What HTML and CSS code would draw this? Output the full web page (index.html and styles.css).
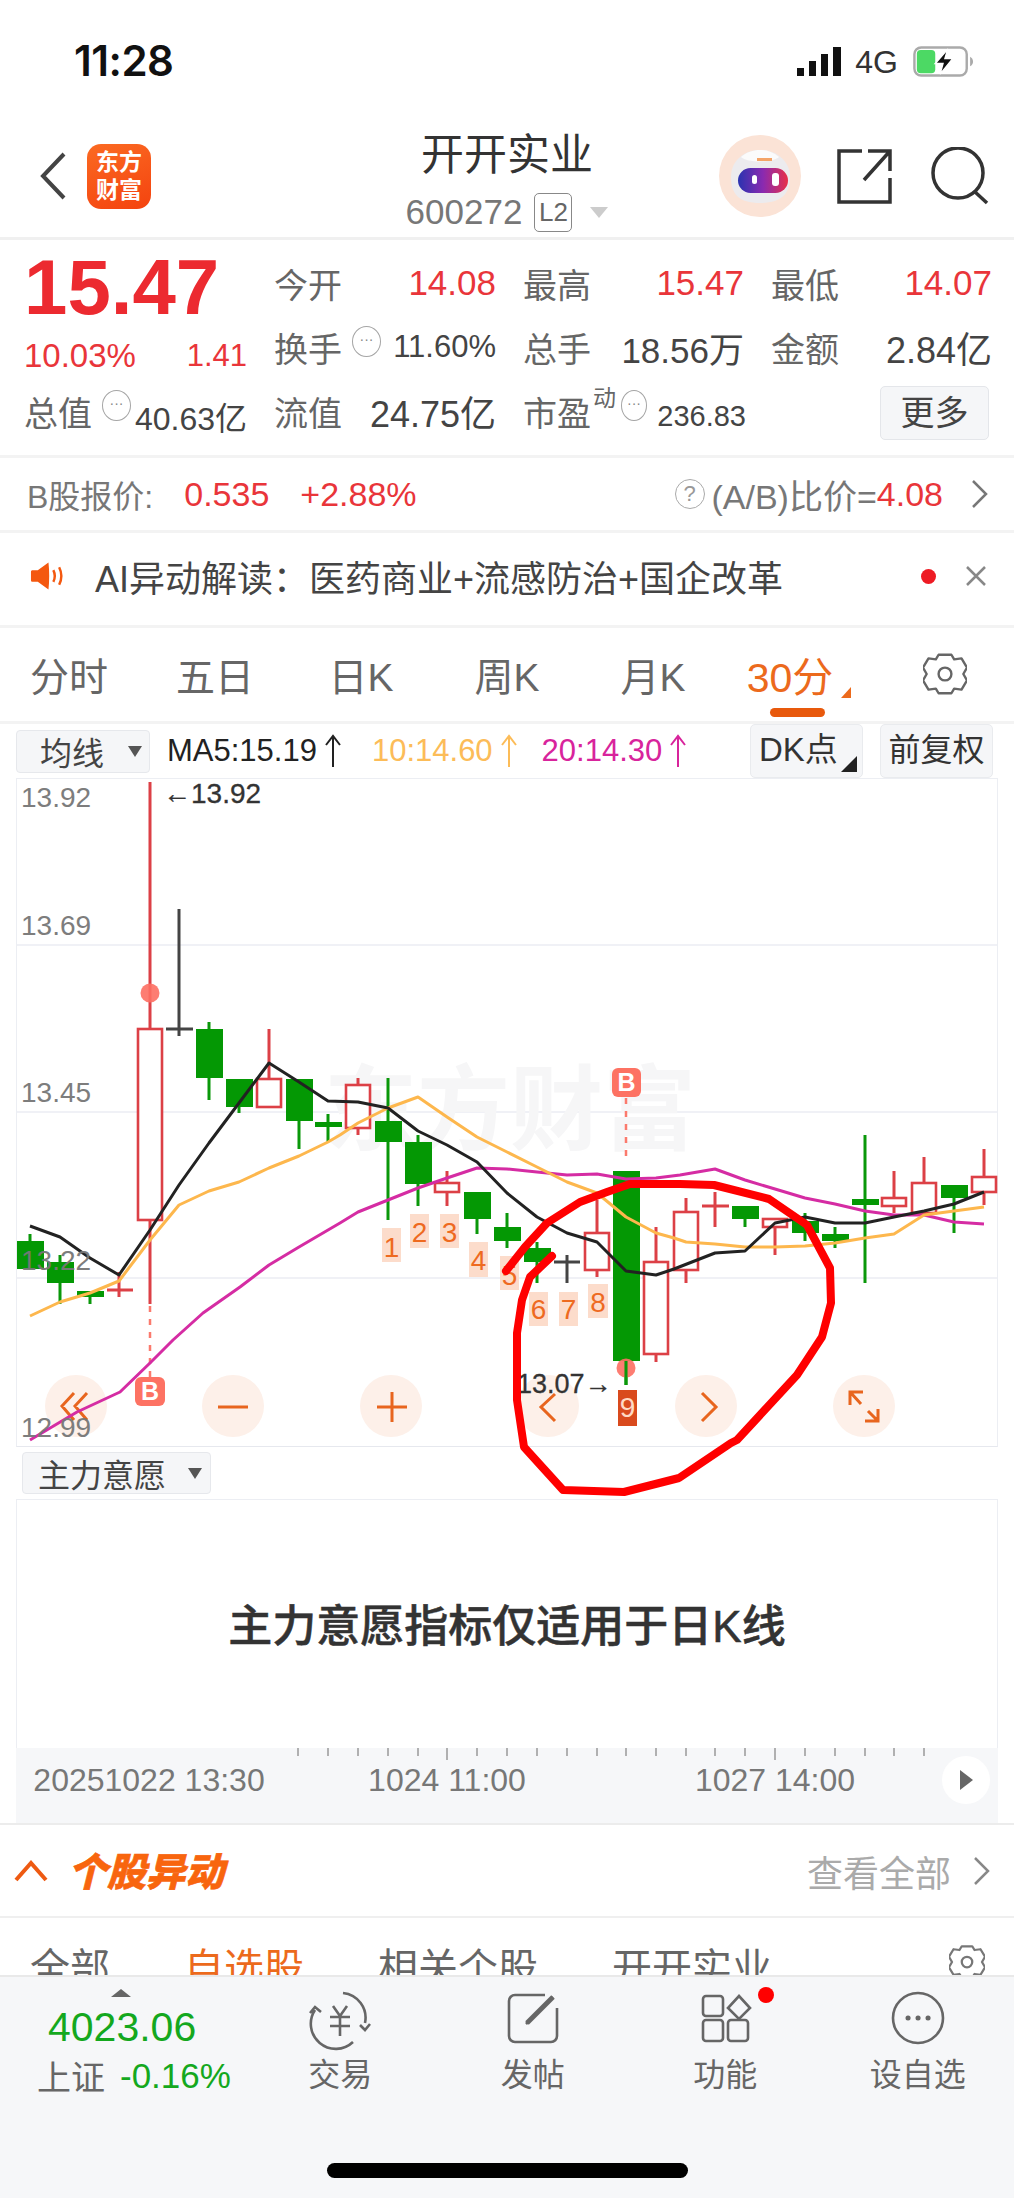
FILE: index.html
```html
<!DOCTYPE html>
<html lang="zh">
<head>
<meta charset="utf-8">
<title>开开实业</title>
<link rel="stylesheet" href="styles.css">
</head>
<body>
<div class="page">
  <div class="status">
    <span class="time">11:28</span>
    <div class="status-right">
      <svg class="signal" viewBox="0 0 45 30"><path d="M0 21h7v8H0zM12 14h7v15h-7zM24 7h7v22h-7zM36 0h8v29h-8z" fill="#111"/></svg>
      <span class="net">4G</span>
      <svg class="battery" viewBox="0 0 62 32"><rect x="1.5" y="1.5" width="54" height="29" rx="7" fill="none" stroke="#aaa" stroke-width="2.5"/><path d="M59 11c2 1 3 3 3 5s-1 4-3 5z" fill="#aaa"/><rect x="4" y="4" width="19" height="24" rx="4" fill="#4cd964"/><path d="M36 3 23 18h8l-3 11 13-16h-8z" fill="#111" stroke="#fff" stroke-width="1.5"/></svg>
    </div>
  </div>

  <header class="topbar">
    <div class="top-left">
      <svg class="back" viewBox="0 0 26 48"><path d="M24 2 3 24l21 22" fill="none" stroke="#444" stroke-width="4"/></svg>
      <div class="logo"><span>东方</span><span>财富</span></div>
    </div>
    <div class="top-center">
      <div class="title">开开实业</div>
      <div class="sub"><span>600272</span><span class="l2">L2</span><i class="sub-tri"></i></div>
    </div>
    <div class="top-right">
      <svg class="avatar" viewBox="0 0 82 82">
        <defs><linearGradient id="visor" x1="0" x2="1"><stop offset="0" stop-color="#2a33b0"/><stop offset=".5" stop-color="#8a2ab0"/><stop offset="1" stop-color="#e8304a"/></linearGradient></defs>
        <circle cx="41" cy="41" r="41" fill="#fbe3d6"/>
        <path d="M12 42C12 25 26 15 41 15s30 10 30 27-9 26-30 26S12 59 12 42z" fill="#ecebee"/>
        <path d="M22 22c6-5 12-7 19-7s13 2 19 7c-6 6-32 6-38 0z" fill="#fbfbfb"/>
        <rect x="19" y="33" width="50" height="25" rx="12.5" fill="url(#visor)"/>
        <rect x="33" y="40" width="5" height="9" rx="2.5" fill="#fff"/><rect x="53" y="38" width="7" height="13" rx="3" fill="#fff"/>
        <rect x="38" y="23" width="15" height="3" fill="#f4a468"/>
      </svg>
      <svg class="share" viewBox="0 0 56 56"><path d="M26 3H3v51h51V30M28 32 54 3M32 3h22v20" fill="none" stroke="#333" stroke-width="3.5"/></svg>
      <svg class="search" viewBox="0 0 60 58"><circle cx="28" cy="26" r="25" fill="none" stroke="#333" stroke-width="3.5"/><path d="m44 44 13 12" stroke="#333" stroke-width="3.5" fill="none"/></svg>
    </div>
  </header>

  <section class="quote">
    <div class="cell"><span class="price">15.47</span></div>
    <div class="cell"><span class="lb">今开</span><span class="val up">14.08</span></div>
    <div class="cell"><span class="lb">最高</span><span class="val up">15.47</span></div>
    <div class="cell"><span class="lb">最低</span><span class="val up">14.07</span></div>

    <div class="cell cell-low"><span class="val33 up">10.03%</span><span class="val31 up">1.41</span></div>
    <div class="cell"><span class="group"><span class="lb">换手</span><i class="dots">···</i></span><span class="val31">11.60%</span></div>
    <div class="cell"><span class="lb">总手</span><span class="val35">18.56万</span></div>
    <div class="cell"><span class="lb">金额</span><span class="val36">2.84亿</span></div>

    <div class="cell"><span class="group"><span class="lb">总值</span><i class="dots">···</i></span><span class="val32 drop">40.63亿</span></div>
    <div class="cell"><span class="lb">流值</span><span class="val36">24.75亿</span></div>
    <div class="cell"><span class="group"><span class="lb">市盈</span><sup class="dyn">动</sup><i class="dots tight">···</i></span><span class="val29 drop">236.83</span></div>
    <div class="cell cell-end"><button class="more">更多</button></div>
  </section>

  <section class="brow">
    <div class="brow-left"><span class="blb">B股报价:</span><span class="up">0.535</span><span class="up">+2.88%</span></div>
    <div class="brow-right"><i class="help">?</i><span class="blb2">(A/B)比价=</span><span class="up">4.08</span>
      <svg class="chev" viewBox="0 0 17 30"><path d="m2 2 13 13L2 28" fill="none" stroke="#777" stroke-width="2.5"/></svg></div>
  </section>

  <section class="airow">
    <svg class="speaker" viewBox="0 0 36 30"><path d="M2 9h6l11-8c1 9 1 19 0 28L8 21H2a2 2 0 0 1-1-2v-8a2 2 0 0 1 1-2z" fill="#f4580f"/><path d="M24 9c2 4 2 8 0 12M30 6c3 6 3 12 0 18" fill="none" stroke="#f4580f" stroke-width="2.5"/></svg>
    <span class="aitext">AI异动解读：医药商业+流感防治+国企改革</span>
    <i class="reddot"></i>
    <svg class="close" viewBox="0 0 22 22"><path d="m2 2 18 18M20 2 2 20" stroke="#888" stroke-width="2.5"/></svg>
  </section>

  <nav class="tabs">
    <span>分时</span><span>五日</span><span>日K</span><span>周K</span><span>月K</span>
    <span class="active">30分</span>
    <svg class="gear" viewBox="-24 -24 48 48"><path d="M-7-21H7l3 5 8-1 6 10-4 7 4 7-6 10-8-1-3 5H-7l-3-5-8 1-6-10 4-7-4-7 6-10 8 1z" fill="none" stroke="#666" stroke-width="2.6" stroke-linejoin="round"/><circle r="7" fill="none" stroke="#666" stroke-width="2.6"/></svg>
  </nav>

  <div class="mabar">
    <div class="select ma-select"><span>均线</span><i class="down"></i></div>
    <span class="ma black">MA5:15.19<svg class="arr" viewBox="0 0 18 34"><path d="M9 33V2M2 11l7-9 7 9" fill="none" stroke="currentColor" stroke-width="2"/></svg></span>
    <span class="ma yellow">10:14.60<svg class="arr" viewBox="0 0 18 34"><path d="M9 33V2M2 11l7-9 7 9" fill="none" stroke="currentColor" stroke-width="2"/></svg></span>
    <span class="ma pink">20:14.30<svg class="arr" viewBox="0 0 18 34"><path d="M9 33V2M2 11l7-9 7 9" fill="none" stroke="currentColor" stroke-width="2"/></svg></span>
    <span class="spacer"></span>
    <div class="btn dk">DK点<i class="corner"></i></div>
    <div class="btn fq">前复权</div>
  </div>

  <div class="chart">
    <svg class="chart-svg" viewBox="16 778 982 669">
      <path class="grid" d="M17 945H997M17 1112H997M17 1278H997"/>
      <text class="watermark" x="324" y="1143">东方财富</text>

      <circle class="ctl" cx="76" cy="1406" r="31"/><circle class="ctl" cx="233" cy="1406" r="31"/><circle class="ctl" cx="391" cy="1406" r="31"/><circle class="ctl" cx="548" cy="1406" r="31"/><circle class="ctl" cx="706" cy="1406" r="31"/><circle class="ctl" cx="864" cy="1406" r="31"/>
      <path class="ctl-ico" d="M74 1393 62 1406l12 14M87 1393l-12 13 12 14M218 1407h30M377 1407h30M392 1392v30M555 1394l-14 13 14 14M702 1393l14 14-14 14M861 1404 851 1393M850 1405v-13h13M868 1411l9 9M878 1409v12h-13"/>

      <path class="g-wick" d="M30 1234V1241M60 1255V1304M90 1291V1304M209 1022V1100M239 1079V1113M299 1079V1149M328 1114V1142M388 1078V1220M418 1135V1206M477 1192V1234M507 1213V1248M537 1242V1283M626 1361V1385M745 1206V1227M805 1213V1241M835 1227V1248M865 1135V1283M954 1185V1233"/>
      <path class="g-body" d="M17 1241h27v28h-27zM47 1262h27v21h-27zM77 1291h27v6h-27zM196 1029h27v49h-27zM226 1079h27v28h-27zM286 1079h27v42h-27zM315 1122h27v5h-27zM375 1121h27v21h-27zM405 1142h27v42h-27zM464 1192h27v27h-27zM494 1227h27v14h-27zM524 1248h27v14h-27zM613 1171h27v190h-27zM732 1206h27v13h-27zM792 1221h27v12h-27zM822 1234h27v7h-27zM852 1199h27v6h-27zM941 1185h27v13h-27z"/>

      <path class="r-wick" d="M150 782V1029M150 1220V1304M269 1029V1079M358 1078V1085M358 1128V1135M447 1171V1183M447 1192V1206M597 1200V1233M597 1270V1277M656 1227V1262M656 1354V1362M686 1198V1212M686 1270V1283M775 1227V1255M894 1171V1198M894 1206V1213M924 1157V1183M984 1149V1177M984 1192V1205M107 1290H133M119 1272V1297M702 1206H729M715 1192V1227"/>
      <g class="r-body">
        <rect x="138" y="1029" width="24" height="191"/><rect x="257" y="1079" width="24" height="28"/><rect x="346" y="1085" width="24" height="43"/><rect x="435" y="1183" width="24" height="9"/><rect x="585" y="1233" width="24" height="37"/><rect x="644" y="1262" width="24" height="92"/><rect x="674" y="1212" width="24" height="58"/><rect x="763" y="1219" width="24" height="8"/><rect x="882" y="1198" width="24" height="8"/><rect x="912" y="1183" width="24" height="30"/><rect x="972" y="1177" width="24" height="15"/>
      </g>
      <path class="d-wick" d="M179 909V1036M166 1029H193M567 1255V1283M554 1262H580"/>

      <path class="dash" d="M150 1306V1377M626 1098V1160"/>
      <circle class="mark" cx="150" cy="993" r="9.5"/>
      <circle class="mark" cx="626" cy="1368" r="9.5"/>
      <path class="g-wick" d="M626 1361V1385"/>

      <polyline class="l-pink" points="30,1440 77,1412 120,1392 150,1363 173,1340 203,1313 240,1287 269,1265 299,1247 340,1223 358,1212 388,1200 418,1188 447,1178 477,1168 507,1169 537,1172 567,1175 597,1174 626,1179 656,1178 680,1175 715,1169 745,1180 775,1189 805,1198 835,1204 865,1211 894,1215 924,1215 954,1222 984,1224"/>
      <polyline class="l-yellow" points="30,1316 60,1302 90,1293 119,1281 150,1240 179,1205 209,1191 239,1182 269,1168 299,1156 328,1142 340,1135 358,1123 388,1108 418,1097 447,1117 477,1137 507,1152 537,1167 567,1182 597,1193 626,1217 656,1233 674,1238 686,1242 715,1244 745,1247 775,1247 805,1246 835,1243 865,1238 894,1234 924,1215 954,1211 984,1207"/>
      <polyline class="l-black" points="30,1226 60,1237 90,1258 119,1275 150,1230 179,1185 209,1143 239,1103 269,1063 299,1082 328,1101 358,1102 388,1108 418,1131 447,1145 477,1162 507,1193 537,1217 567,1233 597,1242 626,1271 656,1275 674,1269 715,1253 745,1251 775,1223 805,1217 835,1223 865,1223 894,1217 924,1211 954,1204 984,1192"/>

      <g class="td">
        <rect x="382" y="1228" width="19" height="34"/><text x="391.500" y="1257">1</text>
        <rect x="410" y="1214" width="19" height="34"/><text x="419.500" y="1242">2</text>
        <rect x="440" y="1214" width="19" height="34"/><text x="449.500" y="1242">3</text>
        <rect x="469" y="1242" width="19" height="35"/><text x="478.500" y="1270">4</text>
        <rect x="500" y="1256" width="19" height="34"/><text x="509.500" y="1285">5</text>
        <rect x="529" y="1292" width="19" height="34"/><text x="538.500" y="1319">6</text>
        <rect x="559" y="1292" width="19" height="34"/><text x="568.500" y="1319">7</text>
        <rect x="588" y="1284" width="20" height="34"/><text x="598" y="1312">8</text>
      </g>
      <g class="td9"><rect x="618" y="1390" width="19" height="36"/><text x="627.500" y="1417">9</text></g>

      <g class="tagb"><rect x="135" y="1377" width="30" height="29" rx="6"/><text x="150" y="1400">B</text></g>
      <g class="tagb"><rect x="612" y="1068" width="29" height="29" rx="6"/><text x="626.500" y="1091">B</text></g>

      <text class="axis" x="21" y="807">13.92</text>
      <text class="axis" x="21" y="935">13.69</text>
      <text class="axis" x="21" y="1102">13.45</text>
      <text class="axis" x="21" y="1270">13.22</text>
      <text class="axis" x="21" y="1437">12.99</text>
      <text class="note" x="163" y="803">←13.92</text>
      <text class="note small" x="517" y="1393">13.07→</text>
    </svg>
  </div>

  <div class="lower-bar"><div class="select force-select"><span>主力意愿</span><i class="down"></i></div></div>
  <div class="panel">主力意愿指标仅适用于日K线</div>
  <div class="timebar">
    <svg class="time-svg" viewBox="16 1748 982 75">
      <path class="tick" d="M298 1748v8M328 1748v8M358 1748v8M388 1748v8M418 1748v8M447 1748v12M477 1748v8M507 1748v8M537 1748v8M567 1748v8M597 1748v8M626 1748v8M656 1748v8M686 1748v8M715 1748v8M745 1748v8M775 1748v12M805 1748v8M835 1748v8M865 1748v8M894 1748v8M924 1748v8"/>
      <text class="tlabel" x="149" y="1791">20251022 13:30</text>
      <text class="tlabel" x="447" y="1791">1024 11:00</text>
      <text class="tlabel" x="775" y="1791">1027 14:00</text>
      <circle cx="966" cy="1780" r="24" fill="#fff"/>
      <path d="M960 1770v20l13-10z" fill="#666"/>
    </svg>
  </div>

  <div class="sec-head">
    <svg class="chev-up" viewBox="0 0 34 22"><path d="M2 20 17 3l15 17" fill="none" stroke="#ee5a12" stroke-width="4"/></svg>
    <span class="sec-title">个股异动</span>
    <span class="spacer"></span>
    <span class="see-all">查看全部</span>
    <svg class="chev big" viewBox="0 0 17 30"><path d="m2 2 13 13L2 28" fill="none" stroke="#888" stroke-width="2.5"/></svg>
  </div>

  <div class="subtabs">
    <span>全部</span><span class="active">自选股</span><span>相关个股</span><span>开开实业</span>
    <span class="spacer"></span>
    <svg class="gear small" viewBox="-24 -24 48 48"><path d="M-7-21H7l3 5 8-1 6 10-4 7 4 7-6 10-8-1-3 5H-7l-3-5-8 1-6-10 4-7-4-7 6-10 8 1z" fill="none" stroke="#777" stroke-width="3" stroke-linejoin="round"/><circle r="7" fill="none" stroke="#777" stroke-width="3"/></svg>
  </div>

  <footer class="bottom">
    <div class="b-grid">
      <div class="index">
        <i class="idx-tri"></i>
        <div class="idx-num">4023.06</div>
        <div class="idx-row"><span class="idx-name">上证</span><span class="idx-pct">-0.16%</span></div>
      </div>
      <div class="b-item">
        <svg class="b-ico" viewBox="310 1987 60 60"><path d="M343 1992a25 25 0 0 1 22 30M315 2009a25 25 0 0 0 38 32M360 2024l5 5 5-6M310 2012l5-6 6 5M333 2005l7 10 7-10M330 2016h20M330 2025h20M340 2015v20"/></svg>
        <span>交易</span>
      </div>
      <div class="b-item">
        <svg class="b-ico" viewBox="503 1987 60 60"><path d="M545 1994h-30a6 6 0 0 0-6 6v35a6 6 0 0 0 6 6h36a6 6 0 0 0 6-6v-28M526 2023l27-27"/><path class="thick" d="M527 2022l26-26"/></svg>
        <span>发帖</span>
      </div>
      <div class="b-item badge-host">
        <svg class="b-ico" viewBox="695 1987 60 60"><rect x="703" y="1995" width="20" height="20" rx="3"/><rect x="703" y="2019" width="20" height="21" rx="3"/><rect x="728" y="2019" width="20" height="21" rx="3"/><path d="m739 1995 11 12-11 11-11-11z"/></svg>
        <i class="badge"></i>
        <span>功能</span>
      </div>
      <div class="b-item">
        <svg class="b-ico" viewBox="888 1987 60 60"><circle cx="918" cy="2017" r="25"/><path class="dotted" d="M908 2017h.1M918 2017h.1M928 2017h.1"/></svg>
        <span>设自选</span>
      </div>
    </div>
    <div class="home"></div>
  </footer>

  <svg class="annot" viewBox="0 0 1014 2198">
    <polyline points="506,1271 525,1247 547,1223 580,1202 607,1192 630,1184 680,1184 714,1185 769,1199 807,1225 830,1268 831,1303 822,1337 797,1375 737,1440 731,1443 679,1478 624,1492 563,1490 524,1447 517,1400 517,1333 522,1300 530,1277 552,1256"/>
  </svg>
</div>
</body>
</html>
```
FILE: styles.css
```css
* { box-sizing: border-box; }
html, body { margin: 0; padding: 0; background: #fff; }
body { font-family: "Liberation Sans", "Noto Sans CJK SC", sans-serif; color: #444; }
i { font-style: normal; display: block; }
svg { display: block; }
.spacer { flex: 1; }
.up { color: #e9353a; }

.page { position: relative; width: 1014px; height: 2198px; overflow: hidden; display: flex; flex-direction: column; background: #fff; }

/* status */
.status { height: 115px; flex: none; display: flex; justify-content: space-between; align-items: flex-start; padding: 38px 40px 0 74px; }
.time { font-family: Inter, "Liberation Sans", sans-serif; font-weight: 600; font-size: 42px; line-height: 46px; letter-spacing: -.5px; color: #111; }
.status-right { display: flex; align-items: center; margin-top: 8px; }
.signal { width: 47px; height: 30px; }
.net { font-size: 32px; line-height: 30px; color: #333; margin: 0 14px 0 12px; }
.battery { width: 62px; height: 31px; }

/* header */
.topbar { height: 125px; flex: none; display: grid; grid-template-columns: 1fr auto 1fr; border-bottom: 3px solid #f0f0f0; }
.top-left { display: flex; align-items: center; padding: 0 0 0 40px; gap: 21px; height: 122px; }
.back { width: 26px; height: 48px; }
.logo { width: 64px; height: 65px; border-radius: 14px; background: linear-gradient(160deg, #fb6a22, #f4430f); color: #fff; font-weight: 700; font-size: 23px; line-height: 28px; display: flex; flex-direction: column; align-items: center; justify-content: center; }
.top-center { display: flex; flex-direction: column; align-items: center; padding-top: 14px; }
.title { font-size: 43px; line-height: 52px; color: #333; }
.sub { display: flex; align-items: center; font-size: 35px; line-height: 40px; color: #777; margin-top: 11px; }
.l2 { border: 1.500px solid #888; border-radius: 5px; width: 38px; height: 39px; font-size: 26px; line-height: 36px; text-align: center; margin: 0 18px 0 12px; color: #666; }
.sub-tri { width: 0; height: 0; border-left: 9px solid transparent; border-right: 9px solid transparent; border-top: 11px solid #ccc; }
.top-right { display: flex; align-items: center; justify-content: flex-end; padding: 0 24px 0 0; }
.avatar { width: 82px; height: 82px; margin-right: 35px; }
.share { width: 56px; height: 56px; margin-right: 38px; }
.search { width: 60px; height: 58px; }

/* quote grid */
.quote { height: 218px; flex: none; display: grid; grid-template-columns: 223px 222px 221px 221px; column-gap: 27px; grid-auto-rows: 64px; padding: 11px 20px 0 24px; border-bottom: 3px solid #f3f3f3; align-content: start; }
.cell { display: flex; align-items: center; justify-content: space-between; white-space: nowrap; }
.cell-low { padding-top: 18px; }
.cell-end { justify-content: flex-end; padding-right: 3px; }
.price { font-size: 78px; font-weight: 700; color: #ec2a30; line-height: 64px; margin-top: 8px; }
.lb { font-size: 34px; color: #666; }
.val { font-size: 35px; }
.val31 { font-size: 31px; }
.val33 { font-size: 33px; }
.val32 { font-size: 32px; }
.val35 { font-size: 35px; }
.val36 { font-size: 36px; }
.val29 { font-size: 29px; padding-left: 2px; margin-right: -2px; }
.drop { padding-top: 10px; }
.group { display: flex; align-items: center; }
.dots { width: 29px; height: 31px; border: 1.500px solid #a5a5a5; border-radius: 50%; font-size: 14px; line-height: 25px; text-align: center; color: #888; margin: -12px 0 0 10px; }
.dots.tight { margin-left: 5px; width: 26px; }
.dyn { font-size: 23px; color: #666; margin: -26px 0 0 2px; line-height: 26px; vertical-align: baseline; }
.more { width: 109px; height: 54px; background: #f5f6f8; border: 1.500px solid #e4e6ea; border-radius: 5px; font: inherit; font-size: 34px; line-height: 48px; color: #444; padding: 0; margin-top: 4px; }

/* B row */
.brow { height: 75px; flex: none; display: flex; align-items: center; justify-content: space-between; padding: 0 26px 0 27px; border-bottom: 3px solid #f3f3f3; font-size: 34px; }
.brow-left { display: flex; align-items: center; gap: 31px; }
.blb { font-size: 32px; color: #777; }
.brow-right { display: flex; align-items: center; }
.help { width: 30px; height: 30px; border: 1.500px solid #aaa; border-radius: 50%; font-size: 22px; line-height: 27px; text-align: center; color: #999; margin-right: 7px; }
.blb2 { color: #777; font-size: 34px; }
.chev { width: 17px; height: 30px; margin-left: 28px; }

/* AI row */
.airow { height: 95px; flex: none; display: flex; align-items: center; padding: 0 27px 6px 30px; border-bottom: 3px solid #f3f3f3; }
.speaker { width: 35px; height: 30px; margin-right: 30px; }
.aitext { flex: 1; font-size: 36px; color: #444; white-space: nowrap; }
.reddot { width: 15px; height: 15px; border-radius: 50%; background: #ee1b24; margin-right: 29px; }
.close { width: 22px; height: 22px; }

/* tabs */
.tabs { height: 96px; flex: none; display: grid; grid-template-columns: repeat(7, 1fr); margin: 0 -4px; align-items: center; justify-items: center; font-size: 39px; color: #666; padding-bottom: 2px; border-bottom: 3px solid #f3f3f3; }
.tabs .active { position: relative; color: #ec6a1c; font-size: 41px; margin-right: 18px; }
.tabs .active::after { content: ""; position: absolute; left: 23px; bottom: -13px; width: 55px; height: 9px; border-radius: 5px; background: #e8590c; }
.tabs .active::before { content: ""; position: absolute; right: -18px; bottom: 6px; width: 0; height: 0; border-left: 10px solid transparent; border-bottom: 11px solid #ec6a1c; }
.gear { width: 44px; height: 44px; }
.gear.small { width: 36px; height: 36px; margin: 2px 0 0; }

/* MA bar */
.mabar { height: 54px; flex: none; display: flex; align-items: center; padding: 0 21px 0 16px; white-space: nowrap; }
.select { display: flex; align-items: center; justify-content: space-between; background: #f5f6f8; border: 1.500px solid #e6e8ec; border-radius: 4px; height: 43px; font-size: 32px; color: #444; }
.ma-select { width: 134px; padding: 0 7px 0 23px; }
.down { width: 0; height: 0; border-left: 7px solid transparent; border-right: 7px solid transparent; border-top: 11px solid #555; }
.ma { display: inline-flex; align-items: center; font-size: 31px; }
.arr { width: 18px; height: 34px; margin-left: 7px; }
.black { color: #222; margin-left: 17px; }
.yellow { color: #fcbc58; margin-left: 30px; }
.pink { color: #d8249c; margin-left: 24px; }
.btn { position: relative; height: 54px; width: 113px; background: #f5f6f8; border: 1.500px solid #e9ebee; border-radius: 5px; font-size: 32px; line-height: 50px; text-align: center; color: #333; }
.dk { text-align: left; padding-left: 8px; font-size: 33px; }
.fq { margin-left: 17px; }
.corner { position: absolute; right: 5px; bottom: 5px; width: 0; height: 0; border-left: 16px solid transparent; border-bottom: 16px solid #222; }

/* chart */
.chart { height: 669px; flex: none; margin: 0 16px; border: 1.500px solid #eceef3; border-bottom-color: #e6e8ee; }
.chart-svg { width: 982px; height: 669px; margin: -1.500px; overflow: hidden; }
.grid { stroke: #f0f1f6; stroke-width: 2; fill: none; }
.watermark { font-size: 93px; font-weight: 700; fill: #f6f6f7; font-family: "Noto Sans CJK SC", sans-serif; }
.ctl { fill: #fdf0e9; }
.ctl-ico { fill: none; stroke: #e8651e; stroke-width: 3; }
.g-wick { fill: none; stroke: #0a980a; stroke-width: 3; }
.g-body { fill: #049804; }
.r-wick { fill: none; stroke: #dc4046; stroke-width: 3; }
.r-body rect { fill: #fff; stroke: #dc4046; stroke-width: 2.600; }
.d-wick { fill: none; stroke: #444; stroke-width: 3; }
.dash { fill: none; stroke: #fb7a6d; stroke-width: 2.500; stroke-dasharray: 6 7; }
.mark { fill: #fd6f63; opacity: .9; }
.l-pink, .l-yellow, .l-black { fill: none; stroke-linejoin: round; stroke-width: 3; }
.l-pink { stroke: #d52ca3; }
.l-yellow { stroke: #fdb74d; }
.l-black { stroke: #222; }
.td rect { fill: #fcdccb; }
.td text { font-size: 28px; fill: #ee6a1f; text-anchor: middle; }
.td9 rect { fill: #d94a1d; }
.td9 text { font-size: 28px; fill: #ffd9c4; text-anchor: middle; }
.tagb rect { fill: #fd7263; }
.tagb text { font-size: 25px; font-weight: 700; fill: #fff; text-anchor: middle; }
.axis { font-size: 28px; fill: #777; opacity: .95; }
.note { font-size: 28px; fill: #333; stroke: #333; stroke-width: .3px; }
.note.small { font-size: 27px; }

/* lower */
.lower-bar { height: 52px; flex: none; padding: 5px 0 0 22px; }
.force-select { width: 189px; height: 42px; padding: 0 8px 0 15px; }
.panel { height: 249px; flex: none; margin: 0 16px; border: 1.500px solid #eceef3; border-bottom: 0; background: #fff; display: flex; align-items: center; justify-content: center; font-size: 44px; font-weight: 500; color: #333; -webkit-text-stroke: .5px #333; padding-bottom: 2px; }
.timebar { height: 75px; flex: none; margin: 0 16px; background: #f6f7f9; }
.time-svg { width: 982px; height: 75px; overflow: hidden; }
.tick { stroke: #999; stroke-width: 1.500; fill: none; }
.tlabel { font-size: 32px; fill: #777; text-anchor: middle; }

.sec-head { height: 95px; flex: none; display: flex; align-items: center; border-top: 2px solid #ececec; border-bottom: 2px solid #efefef; padding: 0 24px 0 14px; }
.chev-up { width: 34px; height: 22px; margin-right: 20px; }
.sec-title { font-size: 39px; font-weight: 900; font-style: italic; color: #f8650e; -webkit-text-stroke: .6px #f8650e; margin-top: -4px; }
.see-all { font-size: 36px; color: #aaa; }
.chev.big { margin-left: 22px; }

.subtabs { height: 57px; flex: none; display: flex; overflow: hidden; padding: 24px 29px 0 30px; gap: 74px; font-size: 40px; line-height: 52px; color: #666; }
.subtabs .active { color: #ec6a1c; }

/* bottom */
.bottom { flex: 1; position: relative; z-index: 1; background: #f6f7f9; border-top: 2px solid #e9e9e9; }
.b-grid { display: grid; grid-template-columns: 244px repeat(4, 192.500px); padding-top: 11px; }
.index { display: flex; flex-direction: column; }
.idx-tri { width: 0; height: 0; margin: 1px 0 0 111px; border-left: 10px solid transparent; border-right: 10px solid transparent; border-bottom: 8px solid #666; }
.idx-num { font-size: 41px; line-height: 46px; color: #14a81e; margin: 7px 0 0 48px; }
.idx-row { display: flex; align-items: center; padding-left: 37px; margin-top: 1px; }
.idx-name { font-size: 34px; color: #666; margin-right: 15px; }
.idx-pct { font-size: 35px; color: #14a81e; }
.b-item { position: relative; display: flex; flex-direction: column; align-items: center; font-size: 32px; line-height: 40px; color: #666; }
.b-item span { margin-top: 7px; }
.b-ico { width: 60px; height: 60px; fill: none; stroke: #666; stroke-width: 2.600; overflow: visible; }
.b-ico .thick { stroke-width: 5; }
.b-ico .dotted { stroke-width: 5; stroke-linecap: round; }
.badge { position: absolute; left: 129px; top: -1px; width: 16px; height: 16px; border-radius: 50%; background: #f00; }
.home { position: absolute; left: 327px; top: 186px; width: 361px; height: 15px; border-radius: 8px; background: #000; }

.annot { position: absolute; left: 0; top: 0; width: 1014px; height: 2198px; z-index: 2; pointer-events: none; }
.annot polyline { fill: none; stroke: #f00; stroke-width: 8; stroke-linejoin: round; stroke-linecap: round; }
```
